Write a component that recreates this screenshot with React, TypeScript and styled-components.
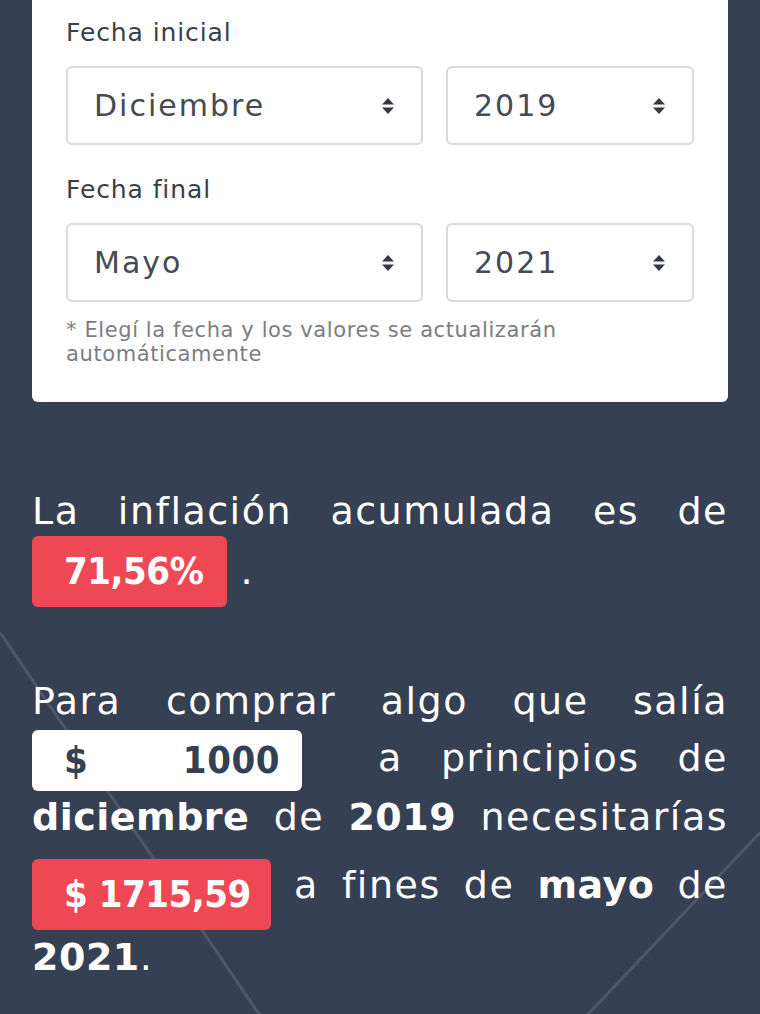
import React, { useState } from "react";
import styled, { createGlobalStyle } from "styled-components";

const GlobalStyle = createGlobalStyle`
  html, body {
    margin: 0;
    padding: 0;
    background: #364053;
  }
  body {
    font-family: "DejaVu Sans", "Liberation Sans", sans-serif;
    -webkit-font-smoothing: antialiased;
  }
`;

const Page = styled.div`
  position: relative;
  min-height: 1014px;
  overflow: hidden;
  padding: 0 32px 40px;
  box-sizing: border-box;
  background: #364053;
`;

const Backdrop = styled.svg`
  position: absolute;
  inset: 0;
  width: 100%;
  height: 100%;
  pointer-events: none;
`;

const Content = styled.div`
  position: relative;
`;

const Card = styled.div`
  background: #ffffff;
  border-radius: 0 0 6px 6px;
  padding: 18px 34px 36px;
`;

const Label = styled.div`
  font-size: 25px;
  line-height: 30px;
  letter-spacing: 0.9px;
  color: #3a3f47;
  margin-bottom: 18px;
`;

const SelectRow = styled.div<{ $last?: boolean }>`
  display: grid;
  grid-template-columns: 357px 1fr;
  gap: 23px;
  margin-bottom: ${(p) => (p.$last ? "16px" : "30px")};
`;

const SelectWrap = styled.div`
  position: relative;
`;

const Select = styled.select`
  appearance: none;
  -webkit-appearance: none;
  width: 100%;
  height: 79px;
  box-sizing: border-box;
  border: 2px solid #d6dade;
  border-radius: 6px;
  background: #ffffff;
  padding: 0 60px 0 26px;
  font-family: inherit;
  font-size: 30px;
  letter-spacing: 2px;
  color: #454b54;
  outline: none;
`;

const Arrows = styled.svg`
  position: absolute;
  right: 28px;
  top: 50%;
  transform: translateY(-50%);
  width: 14px;
  height: 18px;
`;

const Note = styled.p`
  margin: 0;
  font-size: 21px;
  line-height: 24px;
  letter-spacing: 0.6px;
  color: #7a7d82;
`;

const Paragraph = styled.p<{ $gap: number }>`
  margin: ${(p) => p.$gap}px 0 0;
  font-size: 38px;
  line-height: 57px;
  color: #ffffff;
  text-align: justify;
  letter-spacing: 1.5px;
`;

const Strong = styled.b`
  font-weight: 700;
  letter-spacing: 0.5px;
`;

type BadgeProps = {
  $tone: "red" | "white";
  $width: number;
  $height: number;
  $mt: number;
  $mb: number;
};

const Badge = styled.span<BadgeProps>`
  display: inline-flex;
  align-items: center;
  justify-content: space-between;
  box-sizing: border-box;
  vertical-align: middle;
  white-space: nowrap;
  width: ${(p) => p.$width}px;
  height: ${(p) => p.$height}px;
  margin: ${(p) => p.$mt}px 0 ${(p) => p.$mb}px;
  padding: 0 22px 0 32px;
  border-radius: 6px;
  background: ${(p) => (p.$tone === "red" ? "#ef4855" : "#ffffff")};
  color: ${(p) => (p.$tone === "red" ? "#ffffff" : "#364053")};
  font-family: "DejaVu Sans Condensed", "DejaVu Sans", sans-serif;
  font-weight: 700;
  letter-spacing: -0.5px;
`;

const Amount = styled.input`
  width: 140px;
  border: none;
  background: transparent;
  text-align: right;
  font: inherit;
  letter-spacing: 0.5px;
  color: inherit;
  outline: none;
  padding: 0;
`;

const months = [
  "Enero", "Febrero", "Marzo", "Abril", "Mayo", "Junio",
  "Julio", "Agosto", "Septiembre", "Octubre", "Noviembre", "Diciembre",
];
const years = ["2017", "2018", "2019", "2020", "2021"];

const ArrowIcon = () => (
  <Arrows viewBox="0 0 14 18">
    <path d="M7 1 L13 7.5 H1 Z" fill="#343a40" />
    <path d="M7 17 L13 10.5 H1 Z" fill="#343a40" />
  </Arrows>
);

const DateSelect = (props: { value: string; options: string[]; onChange: (v: string) => void }) => (
  <SelectWrap>
    <Select value={props.value} onChange={(e) => props.onChange(e.target.value)}>
      {props.options.map((o) => (
        <option key={o} value={o}>{o}</option>
      ))}
    </Select>
    <ArrowIcon />
  </SelectWrap>
);

export default function App() {
  const [startMonth, setStartMonth] = useState("Diciembre");
  const [startYear, setStartYear] = useState("2019");
  const [endMonth, setEndMonth] = useState("Mayo");
  const [endYear, setEndYear] = useState("2021");
  const [amount, setAmount] = useState("1000");

  return (
    <>
      <GlobalStyle />
      <Page>
        <Backdrop viewBox="0 0 760 1014" preserveAspectRatio="none">
          <g stroke="#7a8496" strokeWidth="3" opacity="0.35" fill="none">
            <line x1="0" y1="625" x2="267" y2="1014" />
            <line x1="760" y1="823" x2="577" y2="1014" />
          </g>
        </Backdrop>
        <Content>
          <Card>
            <Label>Fecha inicial</Label>
            <SelectRow>
              <DateSelect value={startMonth} options={months} onChange={setStartMonth} />
              <DateSelect value={startYear} options={years} onChange={setStartYear} />
            </SelectRow>
            <Label>Fecha final</Label>
            <SelectRow $last>
              <DateSelect value={endMonth} options={months} onChange={setEndMonth} />
              <DateSelect value={endYear} options={years} onChange={setEndYear} />
            </SelectRow>
            <Note>* Elegí la fecha y los valores se actualizarán automáticamente</Note>
          </Card>

          <Paragraph $gap={81}>
            La inflación acumulada es de{" "}
            <Badge $tone="red" $width={195} $height={71} $mt={-4} $mb={0}>71,56%</Badge> .
          </Paragraph>

          <Paragraph $gap={66}>
            Para comprar algo que salía{" "}
            <Badge $tone="white" $width={270} $height={61} $mt={-2} $mb={-2}>
              <span>$</span>
              <Amount value={amount} onChange={(e) => setAmount(e.target.value)} />
            </Badge>{" "}
            &nbsp;a principios de <Strong>diciembre</Strong> de <Strong>2019</Strong> necesitarías{" "}
            <Badge $tone="red" $width={239} $height={71} $mt={13} $mb={-1}>$ 1715,59</Badge> a fines de{" "}
            <Strong>mayo</Strong> de <Strong>2021</Strong>.
          </Paragraph>
        </Content>
      </Page>
    </>
  );
}
